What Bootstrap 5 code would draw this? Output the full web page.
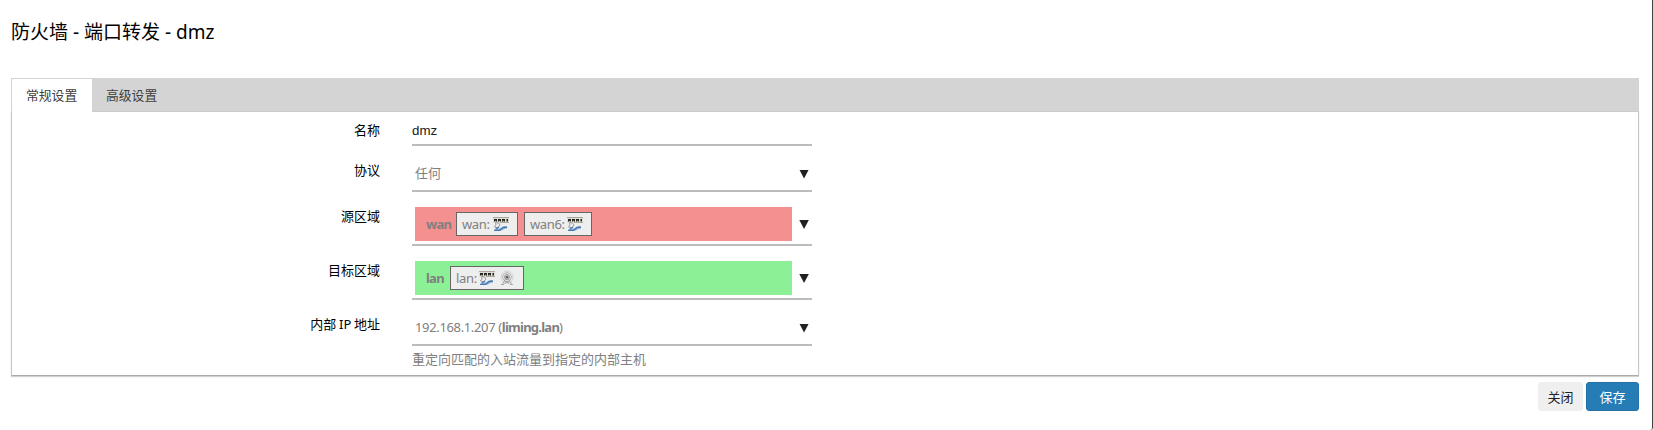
<!DOCTYPE html>
<html lang="zh-CN">
<head>
<meta charset="utf-8">
<meta name="viewport" content="width=device-width, initial-scale=1">
<title>防火墙 - 端口转发 - dmz</title>
<link href="https://cdn.jsdelivr.net/npm/bootstrap@5.3.0/dist/css/bootstrap.min.css" rel="stylesheet">
<style>
body{font:13px/18px "Noto Sans","Noto Sans CJK SC",sans-serif;color:#000;background:#fff}
.page{height:430px;padding:20px 13px 0 11px;border-right:1px solid #404040;border-bottom-right-radius:3px;overflow:hidden}
.title{font-size:19px;line-height:24px;font-weight:400;margin:0 0 34px}
.tabs{height:33px;background:#d4d4d4;border:1px solid #d4d4d4;border-bottom:0}
.tabs .nav-link{font-size:12.8px;line-height:18px;color:#404040;padding:7px 14px;border-radius:0;height:32px}
.tabs .nav-link.active{background:#fff;width:80px}
.panel{height:265px;border:1px solid #c4c4c4;border-top-color:#ccc;border-bottom-color:#aaa;box-shadow:0 1px 1px rgba(0,0,0,.18);padding-top:4px}
.panel>.tabgap{width:80px;height:1px;background:#fff;margin-top:-5px;margin-bottom:4px}
.field{margin-bottom:8px}
.field-name{width:368px;margin-right:32px;text-align:right;padding-top:7px;line-height:18px;word-spacing:-.7px}
label.field-name{padding-top:5px}
.control{width:400px;border:0;border-bottom:2px solid #bcbcbc;height:38px;color:#808080;padding:2px 0 0 3px;letter-spacing:-.35px}
.control .cjk{letter-spacing:0}
.control b{letter-spacing:-.75px}
input.control{height:30px;padding:0;color:#202020;font:13.33px "Liberation Sans",sans-serif;letter-spacing:0;outline:0}
.control.zone{height:46px}
.caret{width:9.5px;height:9px;background:#202020;clip-path:polygon(0 0,100% 0,50% 100%);margin:2px 3.2px 0 auto}
.zone .caret{margin-top:3px}
.zonebar{width:377px;height:34px;padding-left:11px;margin-top:1px}
.wan{background:#f59090}.lan{background:#8cf097}
.iface{width:62px;height:24px;border:1px solid #666;background:#eee;padding:0 0 0 5px;margin-left:6px;line-height:18px}
.iface.w6{width:68px}.iface.two{width:74px}
.iface svg{width:16px;height:16px;margin-left:auto;margin-right:8px;flex:none}
.two svg:first-of-type{margin-right:4px}.two svg+svg{margin-left:0}
.wan b{width:24px}.lan b{width:18px}
.hint{margin-left:400px;color:#808080;margin-top:-4px;line-height:18px}
.act{height:29px;font-size:13px;line-height:27px;padding:1px 0 0;border:1px solid #efefef;background:#efefef;border-radius:3px;color:#202020;width:45px;white-space:nowrap}
.act.save{width:53px;background:#267cb5;border-color:#2270a6;color:#fff}
.actions{gap:3px;margin-top:6px}
</style>
</head>
<body>
<svg class="d-none" xmlns="http://www.w3.org/2000/svg">
<symbol id="port" viewBox="0 0 16 16">
<path fill="#deded6" d="M0 1h16v6H0z"/><path fill="#aaa99c" d="M0 1h16v1H0zM7 6h9v1H7z"/>
<path fill="#22221a" d="M1 3h3v2.5H1zM5 3h3v2.5H5zM9 3h3v2.5H9zM13.5 3H15v2.5h-1.5z"/>
<path fill="#dcd489" d="M2 4.8h1v1H2zM6 4.8h1v1H6zM10 4.8h1v1h-1z"/>
<path fill="#eee" stroke="#888" stroke-width=".8" d="M2.5 6.5l3 .5 1.5 2-2.5 3-3-1 1.5-2z"/>
<path fill="none" stroke="#88aed4" stroke-width="2.5" d="M2 13.8h4c3 0 4-2.8 8-2.6"/>
<path fill="none" stroke="#4778ae" stroke-width="1.3" d="M1 14.3h5c3 0 2-3 5-3.2l3 .2M3 12.7l3-1.7"/>
</symbol>
<symbol id="wifi" viewBox="0 0 16 16">
<g fill="none" stroke="#999"><circle cx="8" cy="7" r="6" stroke="#d2d2d2"/><circle cx="8" cy="7" r="4.3" stroke="#b0b0b0"/><circle cx="8" cy="7" r="2.5"/><path d="M7 8l-3.5 6M9 8l3.5 6M5.5 11l5 2.5M10.5 11l-5 2.5M2 14.5h3M11 14.5h3" stroke-width=".8"/></g><circle cx="8" cy="7" r="1.6" fill="#666"/>
</symbol>
</svg>
<main class="page">
<h1 class="title">防火墙 - 端口转发 - dmz</h1>
<nav class="nav tabs"><a class="nav-link active" href="#">常规设置</a><a class="nav-link" href="#">高级设置</a></nav>
<section class="panel">
<div class="tabgap"></div>
<div class="field d-flex"><label class="field-name" for="name">名称</label><input class="control" id="name" value="dmz"></div>
<div class="field d-flex"><div class="field-name">协议</div><div class="control d-flex align-items-center"><span class="cjk">任何</span><i class="caret"></i></div></div>
<div class="field d-flex"><div class="field-name">源区域</div><div class="control zone d-flex align-items-center"><div class="zonebar wan d-flex align-items-center"><b>wan</b><span class="iface d-flex align-items-center">wan:<svg><use href="#port"/></svg></span><span class="iface w6 d-flex align-items-center">wan6:<svg><use href="#port"/></svg></span></div><i class="caret"></i></div></div>
<div class="field d-flex"><div class="field-name">目标区域</div><div class="control zone d-flex align-items-center"><div class="zonebar lan d-flex align-items-center"><b>lan</b><span class="iface two d-flex align-items-center">lan:<svg><use href="#port"/></svg><svg><use href="#wifi"/></svg></span></div><i class="caret"></i></div></div>
<div class="field d-flex"><div class="field-name">内部 IP 地址</div><div class="control d-flex align-items-center"><span>192.168.1.207 (<b>liming.lan</b>)</span><i class="caret"></i></div></div>
<div class="hint">重定向匹配的入站流量到指定的内部主机</div>
</section>
<div class="actions d-flex justify-content-end"><button class="btn act">关闭</button><button class="btn act save">保存</button></div>
</main>
<script src="https://cdn.jsdelivr.net/npm/bootstrap@5.3.0/dist/js/bootstrap.bundle.min.js"></script>
</body>
</html>
